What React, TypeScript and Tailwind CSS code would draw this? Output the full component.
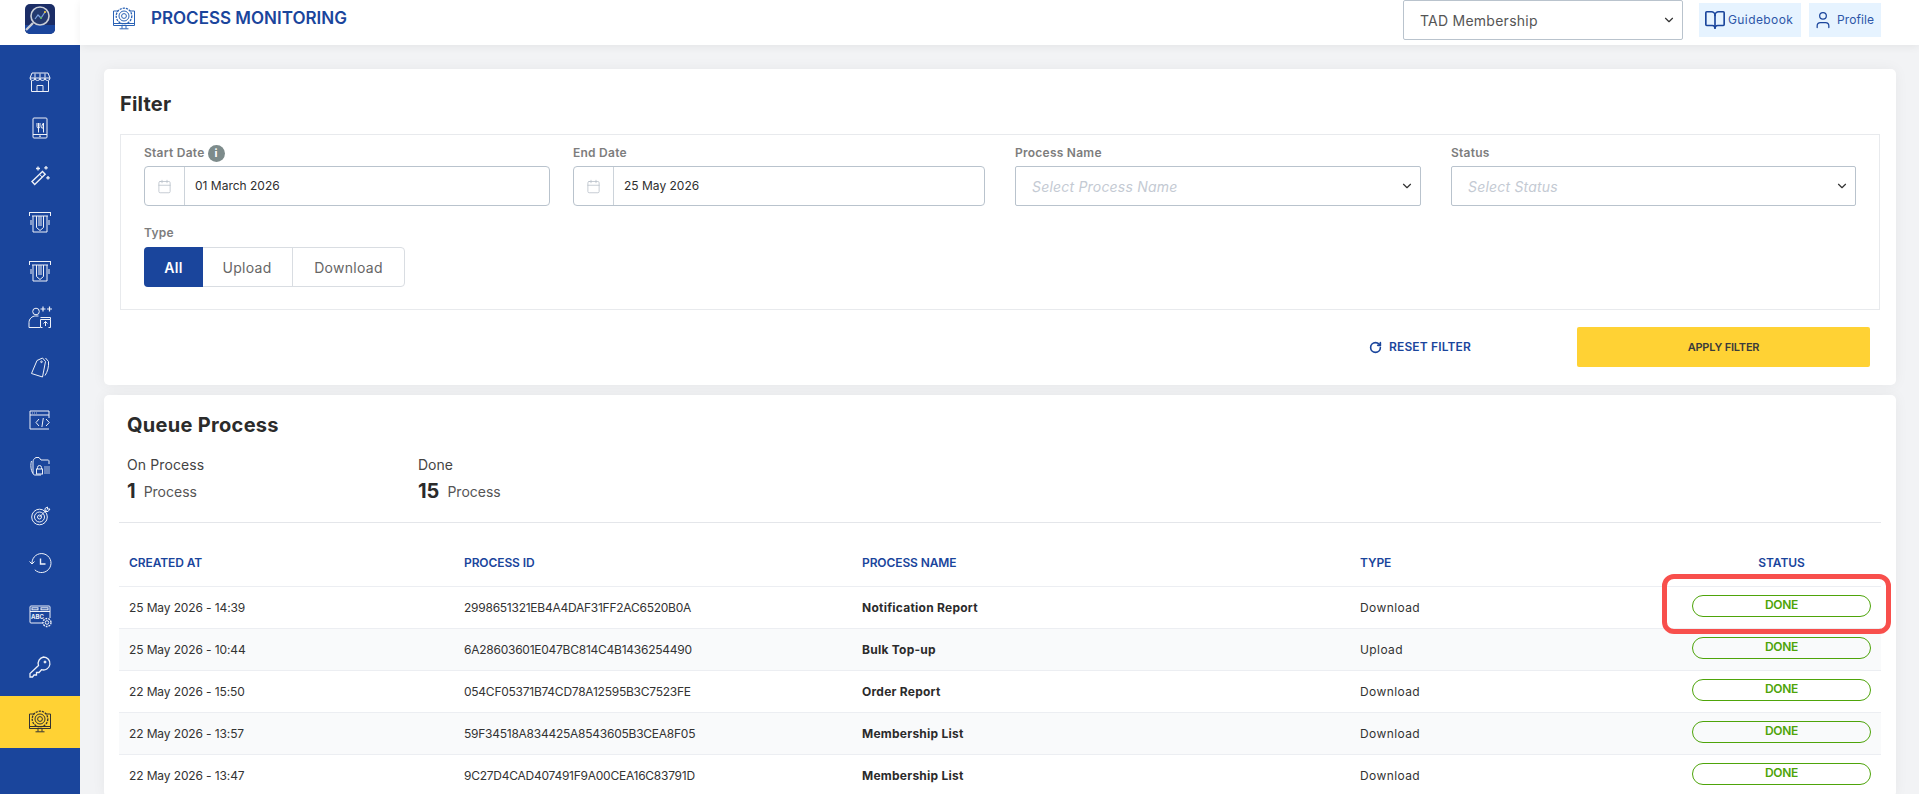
import React from 'react';
import { BookOpen, Calendar, ChevronDown, RotateCw, User } from 'lucide-react';

const Ico: React.FC<{ children: React.ReactNode }> = ({ children }) => (
  <svg viewBox="0 0 24 24" className="w-6 h-6" fill="none" stroke="currentColor" strokeWidth={1}>
    {children}
  </svg>
);

const navIcons = [
  {
    gap: 'mt-[21px]',
    icon: (
      <Ico>
        <path d="M4 3h16l2 5H2z" />
        <path d="M2 8a2.5 2.5 0 0 0 5 0a2.5 2.5 0 0 0 5 0a2.5 2.5 0 0 0 5 0a2.5 2.5 0 0 0 5 0" />
        <path d="M3.5 11v10.5h17V11M9 21.5v-6h6v6" />
        <path d="M7 3.5v4M12 3.5v4M17 3.5v4" />
      </Ico>
    ),
  },
  {
    gap: 'mt-[14px]',
    icon: (
      <Ico>
        <rect x="5" y="2" width="14" height="20" rx="1" />
        <path d="M5 18.5h14M9 7v3.5a1.5 1.5 0 0 0 3 0V7M10.5 7v9.5M15.5 7c-1.2 1-1.8 3-1.8 5h1.8zM15.5 7v9.5" />
        <circle cx="12" cy="20.2" r=".5" />
      </Ico>
    ),
  },
  {
    gap: 'mt-[15px]',
    icon: (
      <Ico>
        <path d="M4 18.5 14.5 8.5l2.7 2.7L6.7 21.5z" strokeWidth={1.4} />
        <path d="M11.5 11.3l2.8 2.8" />
        <path d="M10 3.5v4M8 5.5h4M18 3v3.5M16.2 4.8h3.6M20 13v3.5M18.2 14.8h3.6" strokeWidth={1.3} />
      </Ico>
    ),
  },
  {
    gap: 'mt-[15px]',
    icon: (
      <Ico>
        <path d="M1 2.5h22M1.5 2.5v3.5M22.5 2.5v3.5M4 6h16M5 6v16h14V6" />
        <path d="M8.5 6v11.5l3.5 3 3.5-3V6M11 6v10M13 6v10" />
        <path d="M3 10v5M21 10v5" />
      </Ico>
    ),
  },
  {
    gap: 'mt-[17px]',
    icon: (
      <Ico>
        <path d="M1 2.5h22M1.5 2.5v3.5M22.5 2.5v3.5M4 6h16M5 6v16h14V6" />
        <path d="M8.5 6v11.5l3.5 3 3.5-3V6M11 6v10M13 6v10" />
        <path d="M3 10v5M21 10v5" />
      </Ico>
    ),
  },
  {
    gap: 'mt-[14px]',
    icon: (
      <Ico>
        <circle cx="8" cy="6.5" r="3.3" />
        <path d="M1 22.5v-5c0-3.5 3-6.5 6.5-6.500h3M1 22.5h11" />
        <path d="M12.5 14.5h10v8h-2M12.5 14.5v8h2M12.5 12.5h10v2" />
        <path d="M17.5 21v-4.5M15.5 18.5l2-2 2 2" />
        <path d="M12.5 4h5M15 1.5v5M19 4h5M21.500 1.500v5" strokeWidth={1.2} />
      </Ico>
    ),
  },
  {
    gap: 'mt-[18px]',
    icon: (
      <Ico>
        <path d="M9 5.500 14.500 3l3 3.500-3 15.500-11-3.500z" />
        <circle cx="13.500" cy="6.800" r=".8" />
        <path d="M17.500 3 20.500 6.500c.5 5-1 10.500-3.500 14" />
      </Ico>
    ),
  },
  {
    gap: 'mt-[21px]',
    icon: (
      <Ico>
        <path d="M21 10V3H2v18h19" />
        <path d="M2 7h19" />
        <path d="M4 5h.7M6 5h.7M8 5h.7" />
        <path d="M11 11l-3 3.500 3 3.500M18 11l3.300 3.500-3.300 3.500M15.300 10l-1.400 9" />
      </Ico>
    ),
  },
  {
    gap: 'mt-[15px]',
    icon: (
      <Ico>
        <path d="M5 18V7c0-2 1-3.500 3-4.500h3l2 2.500h7c1 0 1 1 1 1v3M5 18c0 1.500 1 2 2 2h6M3.500 6C2.500 9 2.500 15 5 18.500" />
        <rect x="8.500" y="14" width="6" height="5" />
        <path d="M9.500 14v-1.500a2 2 0 0 1 4 0V14" />
        <path d="M16 12h6M16 14h6M16 16h6M16 18h6" strokeWidth={1.2} opacity={0.7} />
      </Ico>
    ),
  },
  {
    gap: 'mt-[17px]',
    icon: (
      <Ico>
        <circle cx="11.500" cy="13" r="7.800" />
        <circle cx="11.500" cy="13" r="5" />
        <circle cx="11.500" cy="13" r="2" />
        <path d="M11.500 13 19 5.500M17 4.500v3h3l2-2.500h-2.500V3z" />
      </Ico>
    ),
  },
  {
    gap: 'mt-[15px]',
    icon: (
      <Ico>
        <path d="M4 12a9.500 9.500 0 1 1 2.800 6.800" />
        <path d="M1.500 10.500 4 13l2.500-2.500" />
        <path d="M12.500 7.500V13h5" strokeWidth={1.4} />
      </Ico>
    ),
  },
  {
    gap: 'mt-[21px]',
    icon: (
      <Ico>
        <path d="M15 19H3a1 1 0 0 1-1-1V3a1 1 0 0 1 1-1h18a1 1 0 0 1 1 1v11" />
        <path d="M2 7.500h20" />
        <rect x="4" y="3.800" width="6" height="2" />
        <rect x="13" y="3.800" width="7" height="2" />
        <text x="3" y="14.500" fontSize="6" fontWeight="700" fill="currentColor" stroke="none" fontFamily="Inter, sans-serif">ABC</text>
        <circle cx="19" cy="18.500" r="1.800" />
        <circle cx="19" cy="18.500" r="4" strokeDasharray="1.800 1" strokeWidth={1.400} />
      </Ico>
    ),
  },
  {
    gap: 'mt-[19px]',
    icon: (
      <Ico>
        <path d="M15.500 2a6.500 6.500 0 1 1-2 12.700L11 17.500H8.500V20H6l-1.500 2H2v-3.500l8.500-8A6.500 6.500 0 0 1 15.500 2z" strokeWidth={1.3} />
        <circle cx="17" cy="7" r="1" fill="currentColor" />
      </Ico>
    ),
  },
];

const rows = [
  ['25 May 2026 - 14:39', '2998651321EB4A4DAF31FF2AC6520B0A', 'Notification Report', 'Download'],
  ['25 May 2026 - 10:44', '6A28603601E047BC814C4B1436254490', 'Bulk Top-up', 'Upload'],
  ['22 May 2026 - 15:50', '054CF05371B74CD78A12595B3C7523FE', 'Order Report', 'Download'],
  ['22 May 2026 - 13:57', '59F34518A834425A8543605B3CEA8F05', 'Membership List', 'Download'],
  ['22 May 2026 - 13:47', '9C27D4CAD407491F9A00CEA16C83791D', 'Membership List', 'Download'],
];

const MonitorGear = () => (
  <Ico>
    <path d="M6 4H1.500v14.500h21V4H18" />
    <path d="M1.500 16.500h21M10 18.500v3M14 18.500v3M7.500 21.800h9" />
    <circle cx="12" cy="9" r="7.800" strokeDasharray="2.200 1" strokeWidth={1.300} />
    <circle cx="12" cy="9" r="5" />
    <circle cx="12" cy="9" r="2.400" />
  </Ico>
);

const Label: React.FC<{ children: React.ReactNode }> = ({ children }) => (
  <div className="h-5 text-[12px] leading-5 font-semibold tracking-[0.25px] text-[#7d7d7d]">{children}</div>
);

const DateField: React.FC<{ value: string }> = ({ value }) => (
  <div className="mt-[3px] h-10 flex border border-[#b9c3cd] rounded-[4px] bg-white">
    <div className="w-10 flex items-center justify-center border-r border-[#ccd3da] text-[#b4bcc6]">
      <Calendar size={15} strokeWidth={1.2} />
    </div>
    <div className="pl-[10px] flex items-center text-[12px] text-[#2f2f2f]">{value}</div>
  </div>
);

const SelectField: React.FC<{ placeholder: string }> = ({ placeholder }) => (
  <div className="mt-[3px] h-10 flex items-center justify-between pl-4 pr-[6px] border border-[#b9c3cd] rounded-[2px] bg-white">
    <span className="text-[14px] italic tracking-[0.2px] text-[#c4cad3]">{placeholder}</span>
    <ChevronDown size={14} strokeWidth={2} className="text-[#333]" />
  </div>
);

const App: React.FC = () => {
  return (
    <div className="h-[794px] w-full flex overflow-hidden bg-[#f2f3f5] text-[#2b2b2b] [font-family:Inter,sans-serif]">
      <aside className="w-20 shrink-0 flex flex-col">
        <div className="h-[45px] bg-white flex items-start justify-center pt-1">
          <svg viewBox="0 0 30 30" className="w-[30px] h-[30px] rounded-[5px]">
            <rect width="30" height="30" fill="#1b2d66" />
            <rect y="21" width="30" height="9" fill="#1a459c" />
            <circle cx="15" cy="12" r="9" fill="#23396f" stroke="#c9ced8" strokeWidth="1.600" />
            <path d="M10 15l3-4 3 3 4-6" fill="none" stroke="#7ea2e0" strokeWidth="1.200" />
            <circle cx="16" cy="14" r="1" fill="#5cb85c" />
            <circle cx="20" cy="8" r="1" fill="#ffd234" />
            <path d="M8 19l-7 7" stroke="#c9ced8" strokeWidth="2.400" />
          </svg>
        </div>
        <nav className="flex-1 bg-[#1a459c] flex flex-col">
          {navIcons.map((item, i) => (
            <div key={i} className={`${item.gap} h-8 flex items-center justify-center text-[#eef1f8]`}>
              {item.icon}
            </div>
          ))}
          <div className="mt-[13px] h-[52px] bg-[#ffd234] flex items-center justify-center text-[#333]">
            <MonitorGear />
          </div>
        </nav>
      </aside>

      <div className="flex-1 min-w-0 flex flex-col">
        <header className="h-[45px] shrink-0 bg-white shadow-[0_2px_8px_rgba(0,0,0,0.06)] flex items-start pl-8 pr-[38px] relative z-10">
          <div className="h-[38px] flex items-center text-[#2a62b5]">
            <MonitorGear />
          </div>
          <h1 className="ml-[15px] h-[38px] flex items-center text-[17px] font-semibold text-[#1a459c]">
            PROCESS MONITORING
          </h1>
          <div className="ml-auto w-[280px] h-10 flex items-center justify-between pl-4 pr-[6px] border border-[#b9c3cd] rounded-[2px] text-[14px] tracking-[0.25px] text-[#555]">
            TAD Membership
            <ChevronDown size={14} strokeWidth={2} className="text-[#333]" />
          </div>
          <div className="ml-4 mt-[3px] w-[102px] h-[34px] bg-[#e6f3ff] flex items-center pl-[5px] gap-[2px] text-[12px] tracking-[0.4px] text-[#2d56a8]">
            <BookOpen size={22} strokeWidth={1.800} className="text-[#1a459c]" />
            Guidebook
          </div>
          <div className="ml-2 mt-[3px] w-[72px] h-[34px] bg-[#e6f3ff] flex items-center pl-1 gap-1 text-[12px] tracking-[0.1px] text-[#2d56a8]">
            <User size={20} strokeWidth={1.500} className="text-[#1a459c]" />
            Profile
          </div>
        </header>

        <main className="flex-1 min-h-0 pl-6 pr-[23px] pt-6 flex flex-col gap-[10px]">
          <section className="bg-white rounded-[5px] shadow-[0_0_14px_rgba(0,0,0,0.05)] pl-4 pr-[16px] pt-5 pb-[18px]">
            <h2 className="h-[30px] leading-[30px] text-[20px] font-bold tracking-[0.2px] text-[#2b2b2b]">Filter</h2>
            <div className="mt-[15px] border border-[#e8eaed] pl-[23px] pr-[23px] pt-2 pb-[22px]">
              <div className="flex">
                <div className="w-[406px]">
                  <Label>
                    <span className="flex items-center gap-[3px]">
                      Start Date
                      <span className="w-[17px] h-[17px] rounded-full bg-[#7d8b8b] text-white text-[11px] font-bold flex items-center justify-center">i</span>
                    </span>
                  </Label>
                  <DateField value="01 March 2026" />
                </div>
                <div className="ml-[23px] w-[412px]">
                  <Label>End Date</Label>
                  <DateField value="25 May 2026" />
                </div>
                <div className="ml-[30px] w-[406px]">
                  <Label>Process Name</Label>
                  <SelectField placeholder="Select Process Name" />
                </div>
                <div className="ml-[30px] w-[405px]">
                  <Label>Status</Label>
                  <SelectField placeholder="Select Status" />
                </div>
              </div>
              <div className="mt-[17px]">
                <Label>Type</Label>
                <div className="mt-1 w-[261px] h-10 flex border border-[#d9dde2] rounded-[4px] text-[14px] tracking-[0.3px] text-[#666]">
                  <div className="-m-px w-[59px] rounded-l-[4px] bg-[#1a459c] text-white font-semibold flex items-center justify-center">All</div>
                  <div className="w-[91px] border-r border-[#d9dde2] flex items-center justify-center">Upload</div>
                  <div className="flex-1 flex items-center justify-center">Download</div>
                </div>
              </div>
            </div>
            <div className="mt-[17px] flex items-center justify-end pr-[10px]">
              <div className="flex items-center gap-[7px] text-[12px] font-semibold tracking-[0.15px] text-[#1a459c]">
                <RotateCw size={13} strokeWidth={3} />
                RESET FILTER
              </div>
              <div className="ml-[106px] w-[293px] h-10 bg-[#ffd234] rounded-[2px] flex items-center justify-center text-[11px] font-semibold tracking-[-0.2px] text-[#3b3b3b]">
                APPLY FILTER
              </div>
            </div>
          </section>

          <section className="relative flex-1 bg-white rounded-[5px] shadow-[0_0_14px_rgba(0,0,0,0.05)] pl-[15px] pr-[15px] pt-[15px]">
            <div className="pl-2">
              <h2 className="h-[30px] leading-[30px] text-[20px] font-bold tracking-[0.3px] text-[#2b2b2b]">Queue Process</h2>
              <div className="mt-[15px] flex">
                <div className="w-[291px]">
                  <div className="h-5 leading-5 text-[14px] tracking-[0.1px] text-[#444]">On Process</div>
                  <div className="mt-[3px] h-[26px] flex items-center">
                    <span className="text-[20px] font-bold">1</span>
                    <span className="ml-2 text-[14px] text-[#555]">Process</span>
                  </div>
                </div>
                <div>
                  <div className="h-5 leading-5 text-[14px] text-[#444]">Done</div>
                  <div className="mt-[3px] h-[26px] flex items-center">
                    <span className="text-[20px] font-bold">15</span>
                    <span className="ml-2 text-[14px] text-[#555]">Process</span>
                  </div>
                </div>
              </div>
            </div>
            <div className="mt-[18px] border-t border-[#e4e6ea]" />
            <table className="mt-[18px] w-full table-fixed border-collapse">
              <colgroup>
                <col className="w-[335px]" />
                <col className="w-[398px]" />
                <col className="w-[498px]" />
                <col className="w-[332px]" />
                <col />
              </colgroup>
              <thead>
                <tr className="h-[45px] border-b border-[#eceef2] text-[12px] font-semibold tracking-[-0.1px] text-[#1a459c]">
                  <th className="pl-[10px] text-left font-semibold">CREATED AT</th>
                  <th className="pl-[10px] text-left font-semibold">PROCESS ID</th>
                  <th className="pl-[10px] text-left font-semibold">PROCESS NAME</th>
                  <th className="pl-[10px] text-left font-semibold">TYPE</th>
                  <th className="text-center font-semibold">STATUS</th>
                </tr>
              </thead>
              <tbody>
                {rows.map((row, i) => (
                  <tr key={i} className={`h-[42px] border-b border-[#eceef2] text-[12px] text-[#333] ${i % 2 === 1 ? 'bg-[#f9fafb]' : 'bg-white'}`}>
                    <td className="pl-[10px] pt-px tracking-[-0.12px]">{row[0]}</td>
                    <td className="pl-[10px] pt-px tracking-[-0.25px]">{row[1]}</td>
                    <td className="pl-[10px] pt-px font-bold tracking-[0.25px] text-[#2b2b2b]">{row[2]}</td>
                    <td className="pl-[10px] pt-px tracking-[0.4px]">{row[3]}</td>
                    <td className="pl-[10px] pr-[10px] align-top pt-2">
                      <div className="h-[22px] pb-px border border-[#4ea40a] rounded-full flex items-center justify-center text-[12px] font-semibold tracking-[-0.3px] text-[#4ea40a]">DONE</div>
                    </td>
                  </tr>
                ))}
              </tbody>
            </table>
            <div className="absolute left-[1558px] top-[179px] w-[229px] h-[60px] border-[5px] border-[#f84f4c] rounded-[12px]" />
          </section>
        </main>
      </div>
    </div>
  );
};

export default App;
